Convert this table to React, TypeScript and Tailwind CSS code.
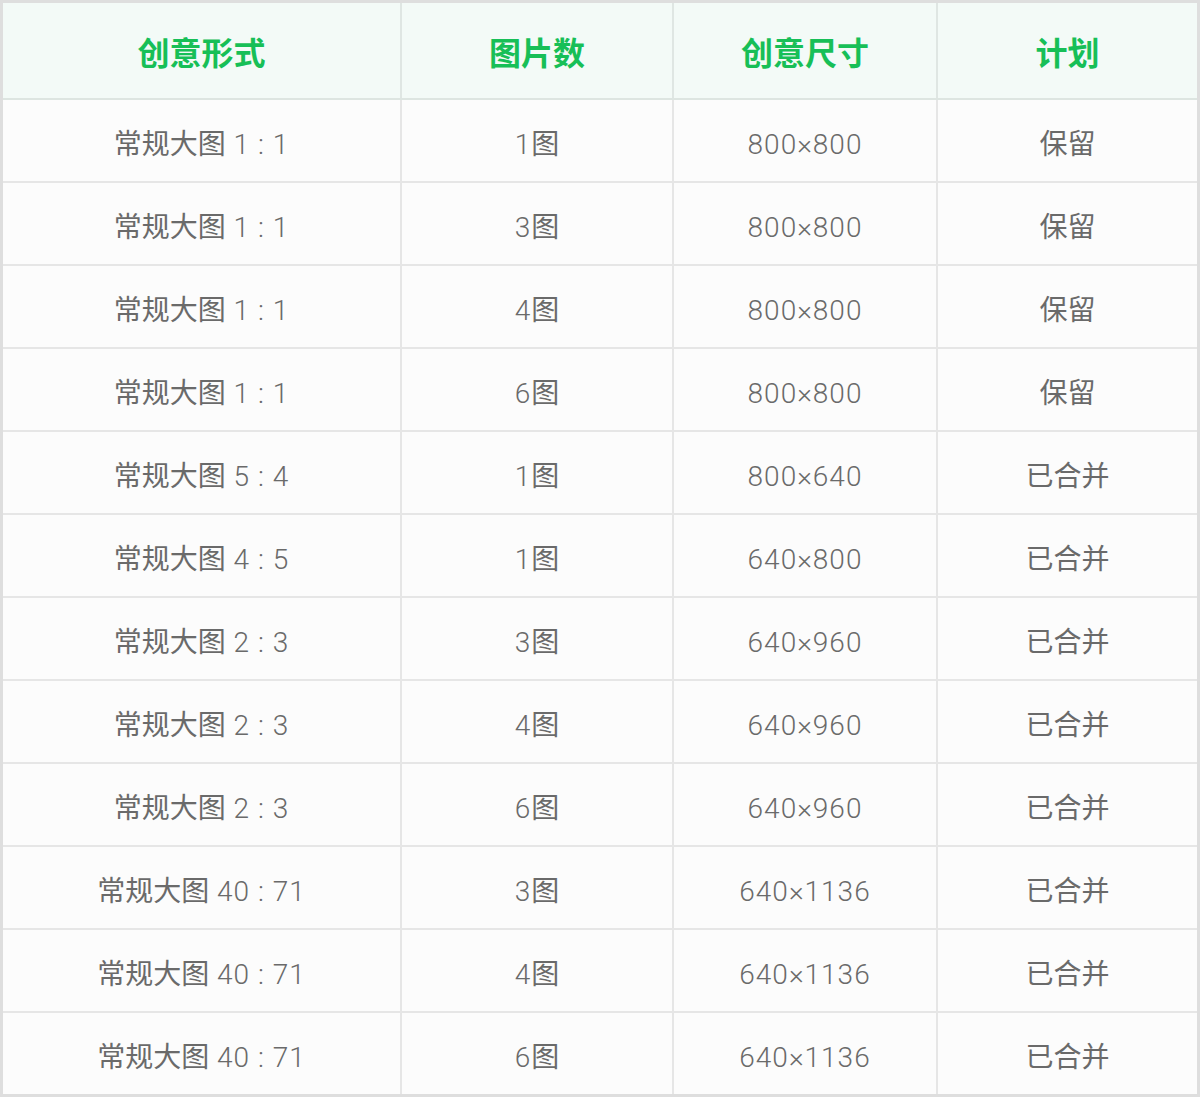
import React from "react";

const rows: [string, string, string, string][] = [
  ["常规大图 1 : 1", "1图", "800×800", "保留"],
  ["常规大图 1 : 1", "3图", "800×800", "保留"],
  ["常规大图 1 : 1", "4图", "800×800", "保留"],
  ["常规大图 1 : 1", "6图", "800×800", "保留"],
  ["常规大图 5 : 4", "1图", "800×640", "已合并"],
  ["常规大图 4 : 5", "1图", "640×800", "已合并"],
  ["常规大图 2 : 3", "3图", "640×960", "已合并"],
  ["常规大图 2 : 3", "4图", "640×960", "已合并"],
  ["常规大图 2 : 3", "6图", "640×960", "已合并"],
  ["常规大图 40 : 71", "3图", "640×1136", "已合并"],
  ["常规大图 40 : 71", "4图", "640×1136", "已合并"],
  ["常规大图 40 : 71", "6图", "640×1136", "已合并"],
];

const headers = ["创意形式", "图片数", "创意尺寸", "计划"];
const widths = ["w-[399px]", "w-[272px]", "w-[264px]", "w-[259px]"];

function Mixed({ text }: { text: string }) {
  const parts = text.match(/[\u4e00-\u9fff]+|[^\u4e00-\u9fff]+/g) || [];
  return (
    <>
      {parts.map((p, i) =>
        /[\u4e00-\u9fff]/.test(p) ? (
          <span key={i}>{p}</span>
        ) : (
          <span key={i} className="font-light tracking-[1px]">
            {p}
          </span>
        )
      )}
    </>
  );
}

export default function App() {
  return (
    <div
      className="w-[1200px] h-[1097px] box-border border-[3px] border-[#dedede] bg-[#fcfcfc] overflow-hidden flex flex-col"
      style={{ fontFamily: 'Roboto, "Noto Sans CJK SC", sans-serif' }}
    >
      <div className="h-[97px] shrink-0 box-border border-b-2 border-[#dde5e1] bg-[#f3faf7] flex">
        {headers.map((h, i) => (
          <div
            key={h}
            className={`${widths[i]} h-full box-border flex items-center justify-center text-[32px] font-bold text-[#17bf57] ${
              i < 3 ? "border-r-2 border-[#dfe6e3]" : ""
            }`}
          >
            <span className="pt-[6px]">{h}</span>
          </div>
        ))}
      </div>
      {rows.map((r, ri) => (
        <div
          key={ri}
          className={`${ri < rows.length - 1 ? "h-[83px] border-b-2" : "h-[81px]"} shrink-0 box-border border-[#e6e6e6] flex`}
        >
          {r.map((c, i) => (
            <div
              key={i}
              className={`${widths[i]} h-full box-border flex items-center justify-center text-[28px] text-[#6a6a6a] ${
                i < 3 ? "border-r-2 border-[#e6e6e6]" : ""
              }`}
            >
              <span className="pt-[8px] whitespace-pre">
                <Mixed text={c} />
              </span>
            </div>
          ))}
        </div>
      ))}
    </div>
  );
}
